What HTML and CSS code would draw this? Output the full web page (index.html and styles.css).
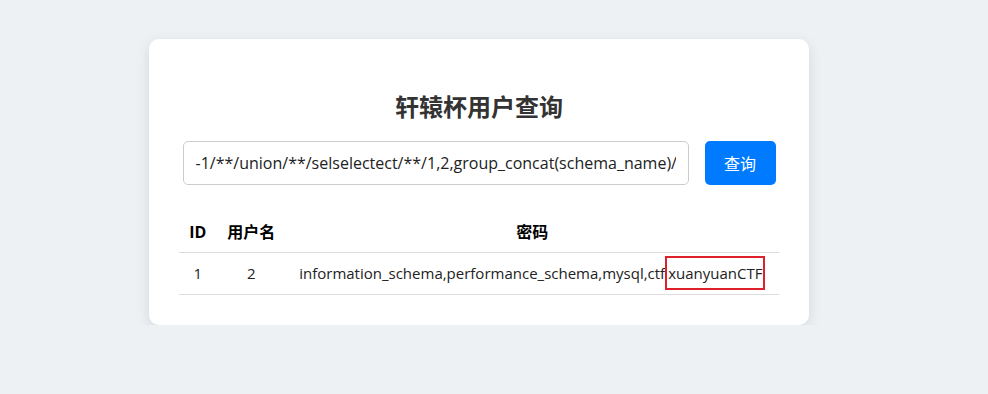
FILE: index.html
```html
<!DOCTYPE html>
<html lang="zh-CN">
<head>
    <meta charset="UTF-8">
    <meta name="viewport" content="width=device-width, initial-scale=1.0">
    <title>轩辕杯用户查询</title>
    <link rel="stylesheet" href="styles.css">
</head>
<body>
    <div class="container">
        <h1>轩辕杯用户查询</h1>

        <form class="search-form">
            <input type="text" name="id" value="-1/**/union/**/selselectect/**/1,2,group_concat(schema_name)/**/frfromom/**/infoorrmation_schema.schemata#">
            <button type="submit">查询</button>
        </form>

        <table>
            <tr>
                <th>ID</th>
                <th>用户名</th>
                <th>密码</th>
            </tr>
            <tr>
                <td>1</td>
                <td>2</td>
                <td>information_schema,performance_schema,mysql,ctf<span class="mark">xuanyuanCTF</span></td>
            </tr>
        </table>
    </div>
</body>
</html>
```

FILE: styles.css
```css
body {
    font-family: "Open Sans", "Noto Sans CJK SC", sans-serif;
    background-color: #eef1f4;
    color: #333;
    margin: 0;
    padding: 39px 30px 0 0;
}
.container {
    width: 600px;
    margin: 0 auto;
    padding: 30px;
    background-color: #fff;
    border-radius: 10px;
    box-shadow: 0 4px 14px rgba(0, 0, 0, 0.1);
}
h1 {
    font-size: 24px;
    line-height: 29px;
    text-align: center;
    color: #333;
    margin: 23px 0 20px;
}
.search-form {
    display: flex;
    justify-content: center;
    gap: 16px;
}
.search-form input {
    width: 506px;
    height: 44px;
    box-sizing: border-box;
    padding: 0 12px;
    font-family: inherit;
    font-size: 16px;
    color: #222;
    border: 1px solid #ccc;
    border-radius: 5px;
}
.search-form button {
    width: 71px;
    height: 44px;
    font-family: inherit;
    font-size: 16px;
    color: #fff;
    background-color: #007bff;
    border: none;
    border-radius: 5px;
}
table {
    width: 100%;
    border-collapse: collapse;
    margin-top: 27px;
}
th, td {
    padding: 10px;
    font-size: 15px;
    line-height: 21px;
    text-align: center;
    border-bottom: 1px solid #ddd;
}
th {
    font-size: 16px;
    line-height: 20px;
    color: #000;
}
td {
    color: #222;
}
.mark {
    border: 2px solid #e0202a;
    padding: 5px 1px;
}
```
